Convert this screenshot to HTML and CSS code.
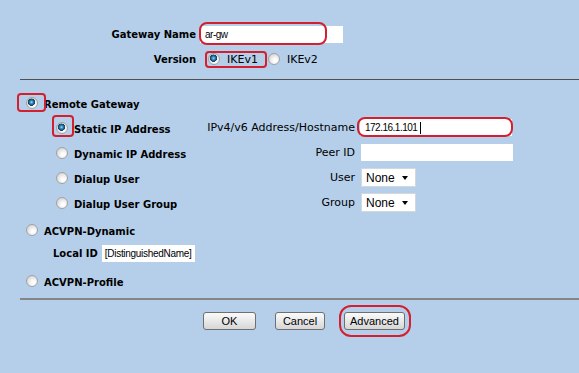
FILE: index.html
```html
<!DOCTYPE html>
<html>
<head>
    <link rel="stylesheet" href="styles.css">
</head>
<body>
    <main class="page">
        <div class="top">
            <span class="label b">Gateway Name</span>
            <div class="mark mark-name"><div class="box name-box">ar-gw</div></div>

            <span class="label b">Version</span>
            <div class="choices">
                <span class="choice mark mark-ike"><span class="radio on"></span>IKEv1</span>
                <span class="choice second"><span class="radio"></span>IKEv2</span>
            </div>
        </div>

        <div class="sep"></div>

        <div class="options">
            <div class="row l1"><span class="radio on mark mark-remote"></span><span class="b opt">Remote Gateway</span></div>

            <div class="row l2">
                <div class="opt-main"><span class="radio on mark mark-static"></span><span class="b opt">Static IP Address</span></div>
                <span class="side-label">IPv4/v6 Address/Hostname</span>
                <div class="mark mark-ip"><div class="box ip-box">172.16.1.101<span class="caret"></span></div></div>
            </div>
            <div class="row l2">
                <div class="opt-main"><span class="radio"></span><span class="b opt">Dynamic IP Address</span></div>
                <span class="side-label">Peer ID</span>
                <div class="box peer-box"></div>
            </div>
            <div class="row l2">
                <div class="opt-main"><span class="radio"></span><span class="b opt">Dialup User</span></div>
                <span class="side-label">User</span>
                <div class="select">None<span class="arrow"></span></div>
            </div>
            <div class="row l2">
                <div class="opt-main"><span class="radio"></span><span class="b opt">Dialup User Group</span></div>
                <span class="side-label">Group</span>
                <div class="select">None<span class="arrow"></span></div>
            </div>

            <div class="row l1 acvpn"><span class="radio"></span><span class="b opt">ACVPN-Dynamic</span></div>
            <div class="row local">
                <span class="b">Local ID</span>
                <div class="box local-box">[DistinguishedName]</div>
            </div>
            <div class="row l1 profile"><span class="radio"></span><span class="b opt">ACVPN-Profile</span></div>
        </div>

        <div class="sep sep-bottom"></div>

        <div class="buttons">
            <button class="btn btn-ok">OK</button>
            <button class="btn btn-cancel">Cancel</button>
            <span class="mark mark-adv"><button class="btn btn-adv">Advanced</button></span>
        </div>
    </main>
</body>
</html>
```

FILE: styles.css
```css
* {
    box-sizing: border-box;
}
body {
    margin: 0;
    background: #b5cfea;
    font-family: "DejaVu Sans", Verdana, sans-serif;
    font-size: 11px;
    color: #000;
}
.page {
    width: 579px;
    height: 373px;
    overflow: hidden;
}
.b {
    font-weight: bold;
    font-size: 10px;
}
.opt {
    margin-top: 4px;
}

/* top part */
.top {
    display: grid;
    grid-template-columns: 196px auto;
    grid-auto-rows: 18px;
    column-gap: 4px;
    row-gap: 7px;
    padding-top: 25px;
    align-items: center;
}
.top .label {
    text-align: right;
}
.box {
    background: #fff;
    height: 18px;
    line-height: 18px;
    padding-left: 5px;
    font-family: "Liberation Sans", Arial, sans-serif;
    font-size: 10px;
    letter-spacing: -0.5px;
}
.name-box {
    width: 143px;
    height: 17px;
    line-height: 17px;
}
.mark-name {
    justify-self: start;
}
.choices {
    display: flex;
    align-items: center;
    height: 18px;
}
.choice {
    display: flex;
    align-items: center;
    height: 18px;
    margin-left: 8px;
}
.choice .radio {
    margin-right: 7px;
}
.choice.second {
    margin-left: 10px;
}

.sep {
    margin: 11px 0 0 20px;
    height: 1px;
    background: #505050;
}
.sep-bottom {
    margin-top: 5px;
    height: 2px;
    background: #858585;
}

/* radios */
.radio {
    flex: none;
    width: 12px;
    height: 12px;
    margin-right: 6px;
    border-radius: 50%;
    border: 1px solid #a2a2a2;
    background: radial-gradient(circle at 62% 66%, #ffffff 15%, #ececec 45%, #c4c4c4 100%);
}
.radio.on {
    background:
        radial-gradient(circle at 45% 42%, #a6e2fb 0, #3a8fc1 1.4px, #134e78 3px, #0f3f62 3.4px, transparent 3.9px),
        radial-gradient(circle at 62% 66%, #ffffff 15%, #ececec 45%, #c4c4c4 100%);
}

/* option rows */
.options {
    margin-top: 10px;
}
.row {
    display: flex;
    align-items: center;
    height: 25px;
}
.l1 {
    padding-left: 26px;
}
.l2 {
    padding-left: 56px;
}
.opt-main {
    width: 144px;
    display: flex;
    align-items: center;
}
.side-label {
    width: 160px;
    padding-right: 5px;
    text-align: right;
}
.ip-box {
    width: 152px;
    height: 17px;
    line-height: 17px;
    display: flex;
    align-items: center;
}
.caret {
    display: inline-block;
    width: 1px;
    height: 12px;
    margin-left: 3px;
    background: #000;
}
.peer-box {
    width: 152px;
    height: 17px;
    margin-left: 1px;
}
.select {
    width: 55px;
    height: 19px;
    margin-left: 1px;
    display: flex;
    align-items: center;
    justify-content: space-between;
    padding: 0 7px 0 4px;
    background: #fff;
    border: 1px solid #d4d8dc;
    font-family: "Liberation Sans", Arial, sans-serif;
    font-size: 12px;
}
.arrow {
    width: 0;
    height: 0;
    border-left: 3.5px solid transparent;
    border-right: 3.5px solid transparent;
    border-top: 4px solid #000;
}
.acvpn {
    margin-top: 2px;
}
.local {
    height: 22px;
    padding-left: 53px;
}
.local-box {
    width: 93px;
    height: 17px;
    line-height: 17px;
    margin-left: 4px;
    padding-left: 3px;
    letter-spacing: -0.3px;
}
.profile {
    margin-top: 4px;
}

/* buttons */
.buttons {
    display: flex;
    gap: 19px;
    margin-top: 12px;
    padding-left: 203px;
}
.btn {
    display: block;
    height: 18px;
    padding: 0;
    border: 1px solid #6f6f6f;
    border-radius: 3px;
    background: linear-gradient(#fafafa, #e9e9e9 50%, #d6d6d6);
    font-family: "Liberation Sans", Arial, sans-serif;
    font-size: 11px;
    color: #000;
}
.btn-ok {
    width: 53px;
}
.btn-cancel {
    width: 50px;
}
.btn-adv {
    width: 61px;
}

/* red annotation marks */
.mark {
    position: relative;
}
.mark::after {
    content: "";
    position: absolute;
    border: 2.5px solid #d3202e;
    border-radius: 7px;
    pointer-events: none;
}
.mark-name::after {
    left: -1px;
    right: 16px;
    top: -4px;
    bottom: -2px;
    border-radius: 8px;
}
.mark-ike::after {
    left: -3px;
    right: -9px;
    top: 1px;
    bottom: 0;
    border-radius: 4px;
}
.mark-remote::after {
    left: -10px;
    right: -9px;
    top: -5px;
    bottom: -4px;
    border-radius: 4px;
}
.mark-static::after {
    left: -5px;
    right: -7px;
    top: -8px;
    bottom: -4px;
    border-radius: 4px;
}
.mark-ip::after {
    left: -3px;
    right: -1px;
    top: -2px;
    bottom: -1px;
    border-radius: 8px;
}
.mark-adv {
    display: block;
}
.mark-adv::after {
    left: -5px;
    right: -6px;
    top: -7px;
    bottom: -7px;
    border-radius: 12px;
}
```
